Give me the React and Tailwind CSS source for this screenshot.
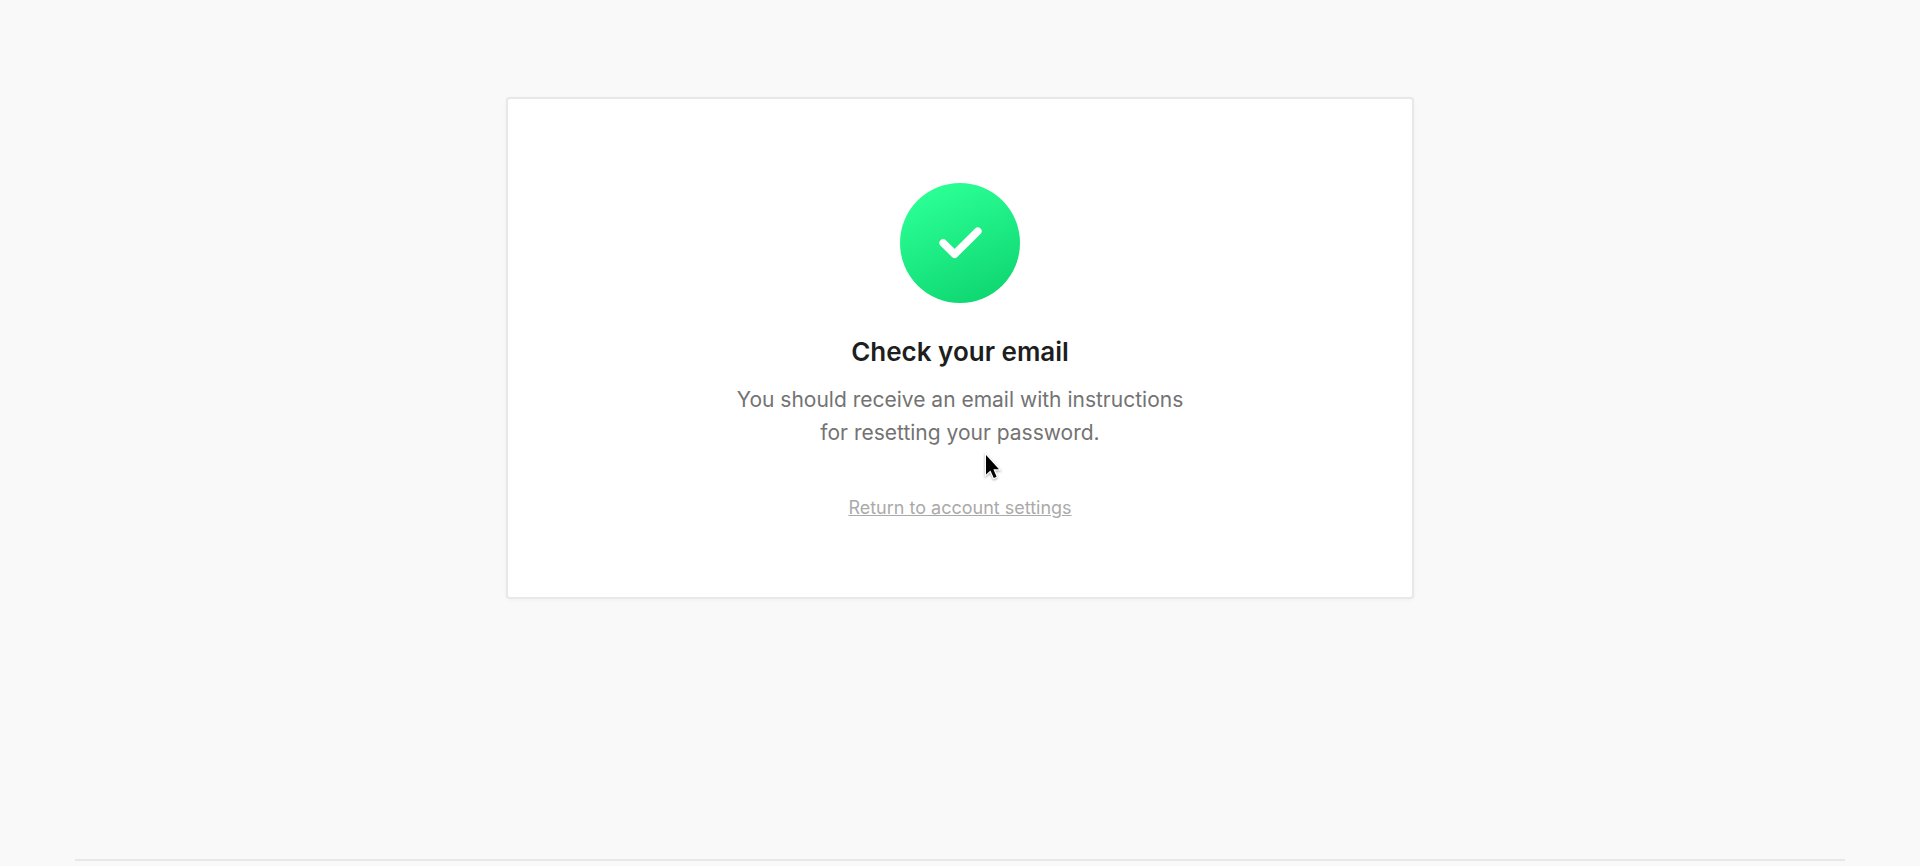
function SuccessIcon() {
  return (
    <svg viewBox="0 0 120 120" className="size-[120px]" aria-hidden="true">
      <defs>
        <linearGradient id="success-fill" x1="0.3" y1="0.05" x2="0.7" y2="0.95">
          <stop offset="0" stopColor="#2aff94" />
          <stop offset="1" stopColor="#10d873" />
        </linearGradient>
      </defs>
      <circle cx="60" cy="60" r="60" fill="url(#success-fill)" />
      <path
        d="M43.2 60L54.6 71.2L77.8 48.2"
        fill="none"
        stroke="#fff"
        strokeWidth="7.6"
        strokeLinecap="round"
        strokeLinejoin="round"
      />
    </svg>
  );
}

function Cursor() {
  return (
    <svg
      viewBox="0 0 20 28"
      className="pointer-events-none absolute top-[355px] left-1/2 ml-[24px] h-[28px] w-[20px] overflow-visible drop-shadow-[0_1px_1px_rgba(0,0,0,0.35)]"
      aria-hidden="true"
    >
      <path
        d="M2 1V20.5L6.4 16.4L9.8 24L12.6 22.7L9.4 15.2H15Z"
        fill="#000"
        stroke="#fff"
        strokeWidth="2.4"
        paintOrder="stroke"
      />
    </svg>
  );
}

export default function App() {
  return (
    <div className="flex min-h-screen flex-col bg-[#f9f9f9] px-[75px] pt-[97px] pb-[5px] font-['Inter','Liberation_Sans',sans-serif]">
      <main className="relative mx-auto flex w-full max-w-[908px] flex-col items-center rounded-[4px] border-2 border-[#e8e8e8] bg-white px-6 pt-[84px] pb-[75px] text-center shadow-[0_1px_4px_rgba(0,0,0,0.04)]">
        <SuccessIcon />
        <h1 className="mt-[31px] text-[26px] leading-[36px] font-semibold text-[#1d1e20]">
          Check your email
        </h1>
        <p className="mt-[13px] max-w-[460px] text-[21px] leading-[33px] text-[#737373]">
          You should receive an email with instructions for resetting your password.
        </p>
        <a
          href="#account"
          className="mt-[45px] text-[18px] leading-[28px] text-[#aaaaaa] underline"
        >
          Return to account settings
        </a>
        <Cursor />
      </main>
      <footer className="mt-auto border-t-2 border-[#e8e8e8]" />
    </div>
  );
}
